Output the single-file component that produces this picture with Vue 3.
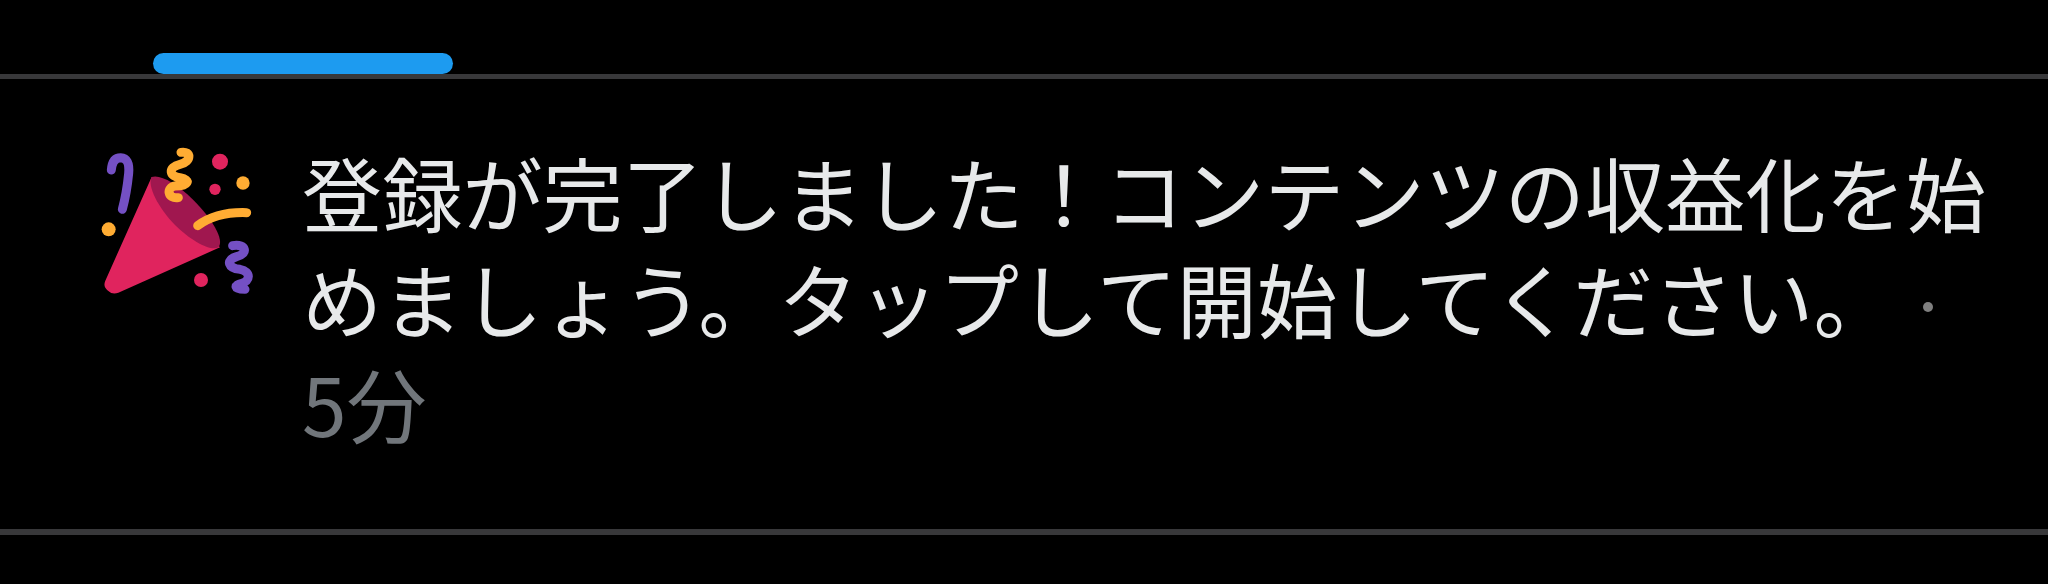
<script setup>
const message = '登録が完了しました！コンテンツの収益化を始めましょう。タップして開始してください。'
const time = '5分'
</script>

<template>
  <div class="page">
    <div class="tabs"><div class="tab-indicator"></div></div>
    <div class="notification">
      <svg class="popper" viewBox="0 0 600 540" aria-hidden="true">
        <path d="M215 141 L76 452 Q68 470 84 482 Q97 495 115 488 L420 352 Z" fill="#e0245e" />
        <path d="M215 141 C240 132 290 160 340 210 C395 265 435 330 415 352 C395 365 335 335 285 285 C235 235 200 165 215 141 Z" fill="#a0174f" />
        <g fill="none" stroke-linecap="round" stroke-linejoin="round" stroke-width="27">
          <path d="M94 120 Q97 83 122 83 Q150 84 146 130 Q140 190 127 238" stroke="#7450c4" />
          <path d="M303 67 C335 62 335 95 300 103 C262 112 268 140 300 143 C335 150 325 168 285 168 C258 172 262 208 295 203" stroke="#ffac33" />
          <path d="M353 287 Q410 245 500 248" stroke="#ffac33" />
          <path d="M458 347 C500 340 505 372 470 380 C435 390 445 415 480 418 C515 425 510 455 485 460 C462 465 460 478 495 478" stroke="#7450c4" />
        </g>
        <circle cx="420" cy="95" r="24" fill="#e0245e" />
        <circle cx="405" cy="178" r="17" fill="#e0245e" />
        <circle cx="363" cy="450" r="21" fill="#e0245e" />
        <circle cx="489" cy="159" r="20" fill="#ffac33" />
        <circle cx="86" cy="298" r="21" fill="#ffac33" />
      </svg>
      <p class="text">{{ message }}<span class="dot"></span><span class="time">{{ time }}</span></p>
    </div>
    <div class="divider"></div>
  </div>
</template>

<style scoped>
.page {
  width: 2048px;
  height: 584px;
  background: #000;
  overflow: hidden;
}
.tabs {
  height: 74px;
  padding-left: 153px;
  display: flex;
  align-items: flex-end;
  box-sizing: border-box;
}
.tab-indicator {
  width: 300px;
  height: 21px;
  background: #1d9bf0;
  border-radius: 11px;
}
.notification {
  height: 455px;
  box-sizing: border-box;
  border-top: 5px solid #38383a;
  padding: 51px 0 0 80px;
  display: flex;
  gap: 22px;
  align-items: flex-start;
}
.popper {
  width: 200px;
  height: 180px;
  flex: none;
}
.text {
  width: 1700px;
  margin: 9px 0 0;
  font-family: "Noto Sans CJK JP", "Liberation Sans", sans-serif;
  font-size: 80.2px;
  line-height: 105.5px;
  font-weight: 400;
  color: #e7e9ea;
}
.dot {
  display: inline-block;
  width: 10px;
  height: 10px;
  margin-left: 29px;
  border-radius: 50%;
  background: #7f7f7f;
  vertical-align: 20px;
}
.time {
  color: #71767b;
  white-space: nowrap;
}
.divider {
  height: 6px;
  background: #38383a;
}
</style>
